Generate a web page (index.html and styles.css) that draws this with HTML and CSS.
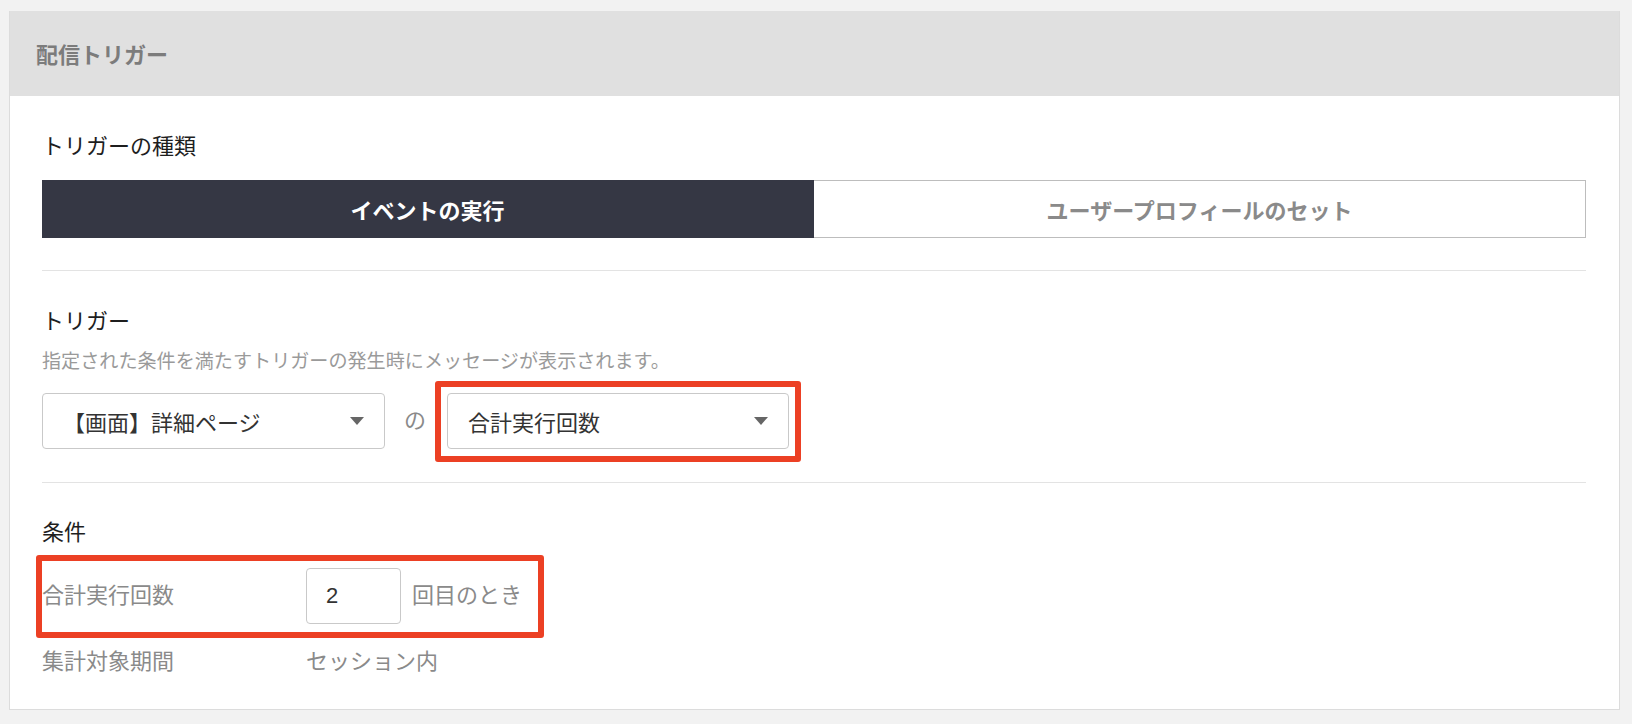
FILE: index.html
```html
<!DOCTYPE html>
<html lang="ja">
<head>
<meta charset="utf-8">
<title>配信トリガー</title>
<link rel="stylesheet" href="styles.css">
</head>
<body>
<div class="card">
  <div class="card-head">配信トリガー</div>
  <div class="card-body">
    <section class="section sec-type">
      <h2 class="sec-title">トリガーの種類</h2>
      <div class="segment">
        <div class="seg seg-active">イベントの実行</div>
        <div class="seg">ユーザープロフィールのセット</div>
      </div>
    </section>
    <section class="section sec-trigger">
      <h2 class="sec-title">トリガー</h2>
      <p class="desc">指定された条件を満たすトリガーの発生時にメッセージが表示されます。</p>
      <div class="select-row">
        <div class="select select-a"><span class="select-text">【画面】詳細ページ</span><span class="caret"></span></div>
        <span class="joiner">の</span>
        <div class="select select-b highlighted"><span class="select-text">合計実行回数</span><span class="caret"></span></div>
      </div>
    </section>
    <section class="section sec-cond">
      <h2 class="sec-title">条件</h2>
      <div class="cond-row cond-count">
        <span class="cond-label">合計実行回数</span>
        <div class="cond-value">
          <div class="num-input">2</div>
          <span class="suffix">回目のとき</span>
        </div>
      </div>
      <div class="cond-row cond-period">
        <span class="cond-label">集計対象期間</span>
        <div class="cond-value"><span class="suffix plain">セッション内</span></div>
      </div>
    </section>
  </div>
</div>
</body>
</html>
```

FILE: styles.css
```css
*, *::before, *::after { box-sizing: border-box; }
html, body { margin: 0; padding: 0; }
body {
  background: #f2f2f2;
  font-family: "Liberation Sans", "Noto Sans CJK JP", sans-serif;
  padding: 11px 12px 14px 9px;
  color: #1e1e1e;
}
.card {
  width: 1611px;
  height: 699px;
  background: #fff;
  border: 1px solid #dcdcdc;
  border-top: none;
}
.card-head {
  height: 85px;
  background: #e0e0e0;
  display: flex;
  align-items: center;
  padding-left: 26px;
  font-size: 22px;
  font-weight: bold;
  color: #7c7c7c;
  padding-bottom: 2px;
}
.card-body {
  padding: 0 33px 0 32px;
}
.section {
  padding-top: 36px;
  border-bottom: 1px solid #e3e3e3;
}
.sec-type { padding-bottom: 32px; }
.sec-trigger { padding-bottom: 33px; }
.sec-cond { border-bottom: none; padding-top: 35px; }
.sec-title {
  margin: 0;
  font-size: 22px;
  font-weight: normal;
  line-height: 30px;
  color: #1e1e1e;
}
.segment {
  margin-top: 18px;
  display: flex;
  height: 58px;
}
.seg {
  flex: 1;
  display: flex;
  align-items: center;
  justify-content: center;
  font-size: 22px;
  font-weight: bold;
  color: #8a8a8a;
  border: 1px solid #bdbdbd;
  border-left: none;
  background: #fff;
}
.seg-active {
  background: #353744;
  border-color: #353744;
  color: #fff;
}
.desc {
  margin: 12px 0 0;
  font-size: 19.1px;
  line-height: 26px;
  color: #9a9a9a;
}
.select-row {
  margin-top: 18px;
  display: flex;
  align-items: center;
}
.select {
  height: 56px;
  border: 1px solid #c9c9c9;
  border-radius: 4px;
  display: flex;
  align-items: center;
  justify-content: space-between;
  padding: 0 20px 0 20px;
  font-size: 22px;
  color: #333;
  background: #fff;
}
.select-a { width: 343px; }
.select-b { width: 342px; }
.caret {
  width: 0;
  height: 0;
  border-left: 7px solid transparent;
  border-right: 7px solid transparent;
  border-top: 8px solid #666;
}
.joiner {
  font-size: 22px;
  color: #8a8a8a;
  margin: 0 21px 0 19px;
  line-height: 30px;
}
.highlighted { position: relative; }
.highlighted::after {
  content: "";
  position: absolute;
  top: -13px;
  left: -13px;
  right: -13px;
  bottom: -14px;
  border: 6px solid #ec4024;
  border-radius: 3px;
}
.cond-row {
  display: grid;
  grid-template-columns: 264px 1fr;
  align-items: center;
  font-size: 22px;
  color: #8a8a8a;
}
.cond-count {
  margin-top: 20px;
  height: 56px;
  position: relative;
}
.cond-count::after {
  content: "";
  position: absolute;
  left: -6px;
  top: -13px;
  width: 508px;
  height: 83px;
  border: 6px solid #ec4024;
  border-radius: 3px;
}
.cond-label { line-height: 30px; }
.cond-value {
  display: flex;
  align-items: center;
}
.num-input {
  width: 95px;
  height: 56px;
  border: 1px solid #c9c9c9;
  border-radius: 4px;
  display: flex;
  align-items: center;
  padding-left: 19px;
  font-size: 22px;
  color: #333;
}
.suffix {
  margin-left: 11px;
  line-height: 30px;
}
.suffix.plain { margin-left: 0; }
.cond-period {
  margin-top: 23px;
  line-height: 30px;
}
```
